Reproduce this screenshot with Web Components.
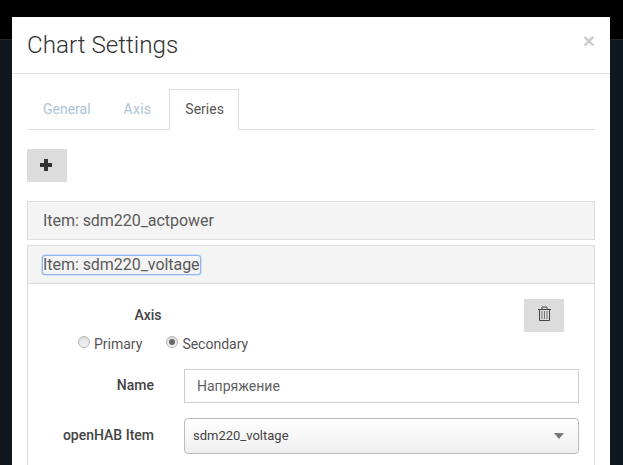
<!DOCTYPE html>
<html>
<head>
<meta charset="utf-8">
<style>
  html, body { margin: 0; height: 100%; overflow: hidden; }
  body { font-family: Roboto, "Liberation Sans", sans-serif; background: #0f171f; }
</style>
</head>
<body>
<app-backdrop></app-backdrop>
<chart-modal title-text="Chart Settings">
  <tab-bar></tab-bar>
  <square-button class="add">
    <svg width="14" height="14" viewBox="0 0 14 14" style="margin:-1px 0 0 -3px"><path d="M5 1h4v4h4v4H9v4H5V9H1V5h4z" fill="#333"/></svg>
  </square-button>
  <series-panel label="Item: sdm220_actpower"></series-panel>
  <series-panel label="Item: sdm220_voltage" open focused>
    <series-form></series-form>
  </series-panel>
</chart-modal>

<script>
class AppBackdrop extends HTMLElement {
  connectedCallback() {
    this.attachShadow({ mode: 'open' });
    this.shadowRoot.innerHTML = `
      <style>
        :host { display: block; height: 39px; background: #000; border-bottom: 1px solid #20272e; }
      </style>
    `;
  }
}

class ChartModal extends HTMLElement {
  connectedCallback() {
    this.attachShadow({ mode: 'open' });
    this.shadowRoot.innerHTML = `
      <style>
        :host {
          display: block;
          position: absolute;
          top: 17px;
          left: 12px;
          width: 598px;
          bottom: 0;
          background: #fff;
          color: #333;
          overflow: hidden;
        }
        header {
          height: 57px;
          box-sizing: border-box;
          border-bottom: 1px solid #e5e5e5;
          padding: 0 15px;
          display: flex;
          justify-content: space-between;
          align-items: center;
        }
        h4 { margin: 0; font-size: 24.2px; font-weight: 300; line-height: 56px; color: #333; }
        .close { font-size: 21px; font-weight: 700; line-height: 1; color: #ccc; font-family: "Liberation Sans", sans-serif; margin-top: -9px; }
        .body { padding: 15px 15px 0; }
      </style>
      <header><h4></h4><span class="close">×</span></header>
      <div class="body"><slot></slot></div>
    `;
    this.shadowRoot.querySelector('h4').textContent = this.getAttribute('title-text');
  }
}

class TabBar extends HTMLElement {
  connectedCallback() {
    this.attachShadow({ mode: 'open' });
    this.shadowRoot.innerHTML = `
      <style>
        :host { display: flex; height: 41px; box-sizing: border-box; border-bottom: 1px solid #ddd; font-size: 14px; line-height: 20px; margin-bottom: 19px; }
        a { padding: 9px 15px 11px; height: 40px; box-sizing: border-box; border: 1px solid transparent; border-bottom: 0; color: #b0c2d8; margin-right: 1px; }
        a.axis { letter-spacing: .25px; margin-right: 2px; }
        a.active { color: #555; background: #fff; border-color: #ddd; height: 41px; width: 70px; }
      </style>
      <a>General</a><a class="axis">Axis</a><a class="active">Series</a>
    `;
  }
}

class SquareButton extends HTMLElement {
  connectedCallback() {
    this.attachShadow({ mode: 'open' });
    this.shadowRoot.innerHTML = `
      <style>
        :host { display: flex; width: 40px; height: 33px; align-items: center; justify-content: center; background: #dcdcdc; }
        :host(.add) { margin-bottom: 19px; }
      </style>
      <slot></slot>
    `;
  }
}

class SeriesPanel extends HTMLElement {
  connectedCallback() {
    this.attachShadow({ mode: 'open' });
    this.shadowRoot.innerHTML = `
      <style>
        :host { display: block; border: 1px solid #ddd; margin-bottom: 5px; font-size: 16px; color: #5a5a5a; }
        .head { height: 37px; background: #f4f4f4; display: flex; align-items: center; padding-left: 15px; }
        .head span { line-height: 18px; margin-top: 1px; letter-spacing: -.05px; }
        :host([focused]) .head span { outline: 1px solid #8fb6f2; box-shadow: 0 0 0 1.500px #b4cff6; border-radius: 2px; }
        :host([open]) .head { border-bottom: 1px solid #ddd; }
      </style>
      <div class="head"><span></span></div>
      <slot></slot>
    `;
    this.shadowRoot.querySelector('span').textContent = this.getAttribute('label');
  }
}

class SeriesForm extends HTMLElement {
  connectedCallback() {
    this.attachShadow({ mode: 'open' });
    this.shadowRoot.innerHTML = `
      <style>
        :host { display: block; padding: 15px 30px 40px 0; font-size: 14px; color: #555; }
        .top { display: flex; justify-content: space-between; height: 62px; margin-bottom: 8px; }
        .axis { width: 240px; text-align: center; }
        b { font-weight: 500; color: #444; line-height: 33px; display: block; }
        .radios { display: flex; gap: 24px; padding-left: 50px; margin-top: 2px; line-height: 20px; white-space: nowrap; }
        .radios label { display: flex; align-items: center; gap: 4px; }
        .radio { width: 12px; height: 12px; border-radius: 50%; border: 1px solid #b5b5b5; background: linear-gradient(#dcdcdc, #f6f6f6); box-sizing: border-box; margin-top: -5px; display: flex; align-items: center; justify-content: center; }
        .radio.on::after { content: ''; width: 6px; height: 6px; border-radius: 50%; background: #666; }
        .row { display: flex; align-items: center; margin-bottom: 15px; }
        .row b { width: 126px; text-align: right; margin-right: 30px; flex: none; margin-top: -2px; }
        .input { flex: none; width: 395px; height: 34px; box-sizing: border-box; border: 1px solid #ccc; padding: 0 12px; line-height: 32px; color: #5f5f5f; }
        .select { flex: none; width: 395px; height: 36px; box-sizing: border-box; border: 1px solid #bbb; border-radius: 4px; padding: 0 8px; font-size: 13px; line-height: 34px; background: linear-gradient(#fff, #eee); color: #444; display: flex; justify-content: space-between; align-items: center; }
        .select i { border: 5px solid transparent; border-top: 6px solid #777; border-bottom: 0; margin-right: 6px; }
      </style>
      <div class="top">
        <div class="axis">
          <b>Axis</b>
          <div class="radios">
            <label><span class="radio"></span>Primary</label>
            <label><span class="radio on"></span>Secondary</label>
          </div>
        </div>
        <square-button>
          <svg width="13" height="15" viewBox="0 0 13 15" fill="none" stroke="#444" style="margin-top:-4px"><path d="M0 3.500h13M4 3V1h5v2M1.500 4v10.500h10V4"/><path d="M4 5v8M6.500 5v8M9 5v8" stroke="#777"/></svg>
        </square-button>
      </div>
      <div class="row"><b>Name</b><div class="input">Напряжение</div></div>
      <div class="row"><b>openHAB Item</b><div class="select">sdm220_voltage<i></i></div></div>
    `;
  }
}

customElements.define('app-backdrop', AppBackdrop);
customElements.define('chart-modal', ChartModal);
customElements.define('tab-bar', TabBar);
customElements.define('square-button', SquareButton);
customElements.define('series-panel', SeriesPanel);
customElements.define('series-form', SeriesForm);
</script>
</body>
</html>
